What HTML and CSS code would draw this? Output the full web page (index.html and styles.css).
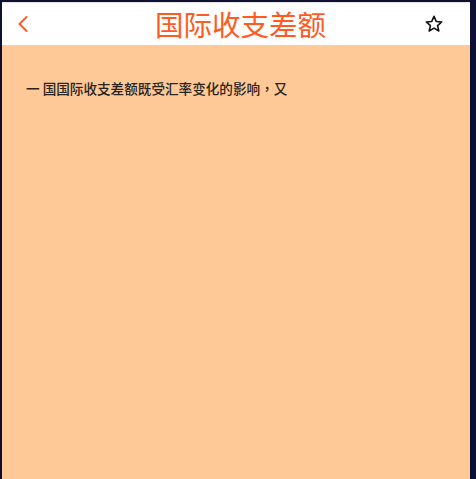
FILE: index.html
```html
<!DOCTYPE html>
<html lang="zh">
<head>
<meta charset="utf-8">
<link rel="stylesheet" href="styles.css">
</head>
<body>
<div class="screen">
  <header class="bar">
    <span class="back">
      <svg width="14" height="18" viewBox="0 0 14 18"><path d="M10.5 2 L3.5 9 L10.5 16" fill="none" stroke="#ff5b2a" stroke-width="2" stroke-linecap="round" stroke-linejoin="round"/></svg>
    </span>
    <h1 class="title">国际收支差额</h1>
    <span class="fav">
      <svg width="20" height="20" viewBox="0 0 24 24"><path d="M12 2.8 L14.7 8.9 L21.3 9.5 L16.3 13.9 L17.8 20.4 L12 17 L6.2 20.4 L7.7 13.9 L2.7 9.5 L9.3 8.9 Z" fill="none" stroke="#111" stroke-width="1.9" stroke-linejoin="round"/></svg>
    </span>
  </header>
  <main class="content">
    <p class="text">一 国国际收支差额既受汇率变化的影响<span class="punct" lang="zh-TW">，</span>又</p>
  </main>
</div>
</body>
</html>
```
FILE: styles.css
```css
html, body {
  margin: 0;
  padding: 0;
  height: 100%;
}
body {
  background: #0e1033;
  padding: 2px 6px 0 2px;
  box-sizing: border-box;
  font-family: "Noto Sans CJK SC", "Noto Sans", sans-serif;
}
.screen {
  height: 100%;
  display: flex;
  flex-direction: column;
  background: #fec996;
}
.bar {
  height: 43px;
  background: #ffffff;
  border-top: 1px solid #e4e4e4;
  box-sizing: border-box;
  display: flex;
  align-items: center;
  padding: 0 26px 0 14px;
}
.back {
  display: flex;
  width: 20px;
}
.title {
  flex: 1;
  margin: 0;
  text-align: center;
  font-size: 28.5px;
  font-weight: 400;
  color: #ff5a1f;
  line-height: 1;
  padding-left: 21px;
}
.fav {
  display: flex;
}
.content {
  flex: 1;
  padding: 33px 24px;
}
.text {
  margin: 0;
  font-size: 13.6px;
  line-height: 20px;
  color: #2a2420;
  font-weight: 500;
}
.punct {
  font-family: "Noto Sans CJK TC", sans-serif;
  font-feature-settings: "locl" 1;
}
```
